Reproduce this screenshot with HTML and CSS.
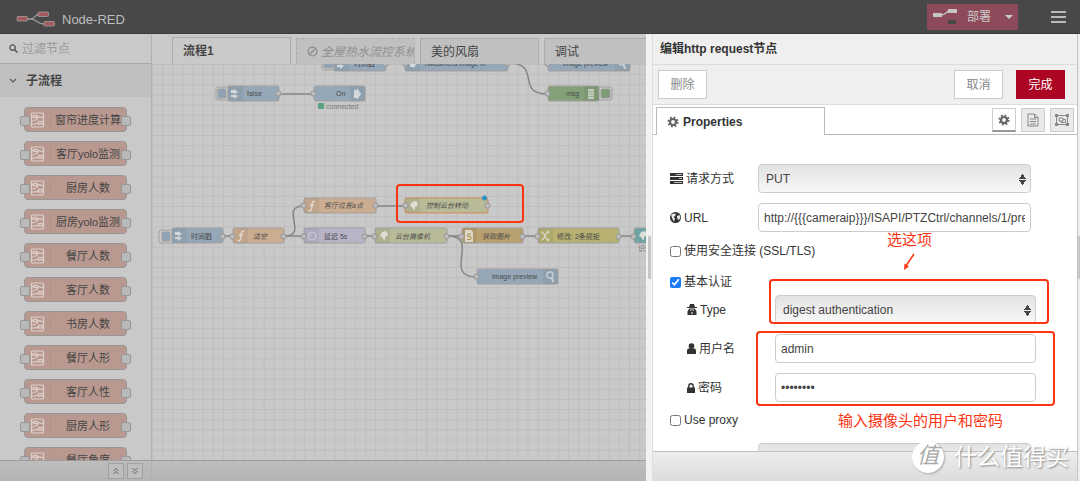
FILE: index.html
```html
<!DOCTYPE html>
<html lang="zh-CN">
<head>
<meta charset="utf-8">
<title>Node-RED</title>
<link rel="stylesheet" href="styles.css">
</head>
<body>
<svg class="defs" aria-hidden="true">
  <symbol id="subflow" viewBox="0 0 14 16"><g fill="none" stroke="#dcd0cc" stroke-width="1.2"><rect x="1" y="1" width="12" height="14" rx="1"/><path d="M1 4.500h2M6.500 4.500C9 4.500 9 5.500 13 5.500M6.500 5C9 6 5 9 1 9M1 12h3c2 0 2-1 4-1M11.500 11H13"/><rect x="3" y="3.500" width="3.500" height="2"/><rect x="8" y="9.500" width="3.500" height="2.500"/></g></symbol>
  <symbol id="arrow-in" viewBox="0 0 8 10"><path d="M0 1h3V0l4 3-4 2V4H0zM0 6h3V5l4 2-4 3V8H0z" fill="#d5d8da"/></symbol>
  <symbol id="arrow-out" viewBox="0 0 8 12"><path d="M1 2h3V0l4 6-4 6v-2H1z" fill="#d5d8da"/></symbol>
  <symbol id="func" viewBox="0 0 8 12"><path d="M7 1.500C5 .5 4.500 2 4.200 4L3.500 9c-.3 2-1.500 2.500-3 1.500M2 5h4" fill="none" stroke="#e0d8d0" stroke-width="1.400"/></symbol>
  <symbol id="planet" viewBox="0 0 10 10"><path d="M3 1l4-1 2 3-1 2-2 1v3L4 8 3 6 1 5z" fill="#deded2"/></symbol>
  <symbol id="mag" viewBox="0 0 10 12"><circle cx="5" cy="4" r="3.200" fill="none" stroke="#d0d5d8" stroke-width="1.200"/><path d="M6.500 7l2 4" stroke="#d0d5d8" stroke-width="1.700"/></symbol>
  <symbol id="gear" viewBox="0 0 14 14"><circle cx="7" cy="7" r="3.500" fill="none" stroke="currentColor" stroke-width="2.600"/><circle cx="7" cy="7" r="5.400" fill="none" stroke="currentColor" stroke-width="2.200" stroke-dasharray="2.120 2.120"/></symbol>
</svg>

<header class="topbar">
  <svg class="brand-mark" width="40" height="17" viewBox="0 0 40 17"><path d="M11 8h3C20 8 18 3.500 23 3.500M14 8c8 0 6 5 14 5" fill="none" stroke="#999" stroke-width="1.300"/><g fill="#a35a5c" stroke="#aaa" stroke-width=".7"><rect x="1" y="5.500" width="10.500" height="4.500" rx="1"/><rect x="22" y="1" width="10.500" height="4.500" rx="1"/><rect x="28" y="10.500" width="10.500" height="4.500" rx="1"/></g></svg>
  <span class="brand">Node-RED</span>
  <button class="deploy"><svg width="24" height="17" viewBox="0 0 24 17"><path d="M8 7c6 0 4-4 9-4" fill="none" stroke="#c4c4c4" stroke-width="1.300"/><path d="M0 5h9v4H0zM15 1h9v4h-9z" fill="#c8c4c4"/><path d="M15 12h8v4h-8z" fill="#484848"/></svg><span>部署</span><i class="caret"></i></button>
  <button class="menu" aria-label="菜单"><i></i><i></i><i></i></button>
</header>

<main class="workspace">
  <div class="editor">
    <aside class="palette">
      <label class="search"><svg width="9" height="9" viewBox="0 0 9 9"><circle cx="3.600" cy="3.600" r="2.700" fill="none" stroke="#555" stroke-width="1.300"/><path d="M5.600 5.600l2.900 2.900" stroke="#555" stroke-width="1.500"/></svg><input type="text" placeholder="过滤节点" aria-label="过滤节点"></label>
      <button class="category"><svg width="8" height="6" viewBox="0 0 8 6"><path d="M1 1l3 3 3-3" fill="none" stroke="#555" stroke-width="1.200"/></svg>子流程</button>
      <div class="nodes">
        <div class="pnode"><svg><use href="#subflow"/></svg><span>窗帘进度计算</span></div>
        <div class="pnode"><svg><use href="#subflow"/></svg><span>客厅yolo监测</span></div>
        <div class="pnode"><svg><use href="#subflow"/></svg><span>厨房人数</span></div>
        <div class="pnode"><svg><use href="#subflow"/></svg><span>厨房yolo监测</span></div>
        <div class="pnode"><svg><use href="#subflow"/></svg><span>餐厅人数</span></div>
        <div class="pnode"><svg><use href="#subflow"/></svg><span>客厅人数</span></div>
        <div class="pnode"><svg><use href="#subflow"/></svg><span>书房人数</span></div>
        <div class="pnode"><svg><use href="#subflow"/></svg><span>餐厅人形</span></div>
        <div class="pnode"><svg><use href="#subflow"/></svg><span>客厅人性</span></div>
        <div class="pnode"><svg><use href="#subflow"/></svg><span>厨房人形</span></div>
        <div class="pnode"><svg><use href="#subflow"/></svg><span>餐厅角度</span></div>
      </div>
      <div class="palette-foot">
        <button aria-label="全部折叠"><svg width="8" height="8" viewBox="0 0 8 8"><path d="M1.500 4L4 1.500 6.500 4M1.500 7L4 4.500 6.500 7" fill="none" stroke="#666"/></svg></button>
        <button aria-label="全部展开"><svg width="8" height="8" viewBox="0 0 8 8"><path d="M1.500 1L4 3.500 6.500 1M1.500 4L4 6.500 6.500 4" fill="none" stroke="#666"/></svg></button>
      </div>
    </aside>
    <section class="flows">
      <nav class="tabs">
        <a href="#" class="tab active">流程1</a>
        <a href="#" class="tab disabled"><svg width="11" height="11" viewBox="0 0 11 11"><circle cx="5.500" cy="5.500" r="4.300" fill="none" stroke="#8c8c8c" stroke-width="1.300"/><path d="M8.500 2.500l-6 6" stroke="#8c8c8c" stroke-width="1.300"/></svg><span>全屋热水流控系统</span></a>
        <a href="#" class="tab">美的风扇</a>
        <a href="#" class="tab last">调试</a>
      </nav>
      <svg class="canvas">
        <defs><pattern id="grid" width="10.150" height="10.150" patternUnits="userSpaceOnUse"><path d="M0 .5H10.150M.5 0V10.150" stroke="#bebebe" stroke-width="1"/></pattern></defs>
        <rect width="100%" height="100%" fill="url(#grid)"/>
        <g transform="translate(-152 -64)">
          <g class="wires">
            <path d="M279 94H314M223 236H233M284 236H304M365 236H375M447 236H462M523 236H538M619 236H634M376 206H405"/>
            <path d="M508 63C543 63 514 94 548 94M284 236C310 236 278 206 304 206M447 236C482 236 441 277 477 277"/>
          </g>
          <g class="box">
            <rect x="216" y="87" width="16" height="13" rx="2" fill="#c9c9c9"/><rect x="218" y="89" width="8" height="9" rx="1" fill="#8fa3b4"/>
            <rect x="322" y="57" width="16" height="13" rx="2" fill="#c9c9c9"/><rect x="324" y="59" width="9" height="9" rx="1" fill="#8fa3b4"/>
            <rect x="159" y="230" width="16" height="13" rx="2" fill="#c9c9c9"/><rect x="162" y="232" width="8" height="9" rx="1" fill="#8fa3b4"/>
            <rect x="596" y="87" width="16" height="13" rx="2" fill="#c9c9c9"/><rect x="601" y="89" width="9" height="9" rx="1" fill="#7a9c72"/>
            <g fill="#96a8b8"><rect x="228" y="86" width="51" height="15" rx="2"/><rect x="314" y="86" width="51" height="15" rx="2"/><rect x="334" y="56" width="52" height="15" rx="2"/><rect x="405" y="56" width="103" height="15" rx="2"/><rect x="548" y="56" width="82" height="15" rx="2"/><rect x="172" y="228" width="51" height="15" rx="2"/><rect x="477" y="269" width="81" height="15" rx="2"/></g>
            <rect x="548" y="86" width="51" height="15" rx="2" fill="#83a079"/>
            <g fill="#ccad92"><rect x="233" y="228" width="51" height="15" rx="2"/><rect x="304" y="198" width="72" height="15" rx="2"/></g>
            <rect x="304" y="228" width="61" height="15" rx="2" fill="#b9b3c8"/>
            <rect x="375" y="228" width="72" height="15" rx="2" fill="#b8ba98"/>
            <rect x="405" y="198" width="83" height="15" rx="2" fill="#b8ba98" class="selected"/>
            <rect x="462" y="228" width="61" height="15" rx="2" fill="#b9a070"/>
            <rect x="538" y="228" width="81" height="15" rx="2" fill="#b7b172"/>
            <rect x="634" y="228" width="60" height="15" rx="2" fill="#6fa3a5"/>
          </g>
          <path class="shade" d="M228 86h15v15h-15zM350 86h15v15h-15zM584 86h15v15h-15zM334 56h15v15h-15zM405 56h15v15h-15zM615 56h15v15h-15zM172 228h15v15h-15zM233 228h15v15h-15zM304 228h15v15h-15zM375 228h15v15h-15zM462 228h15v15h-15zM538 228h15v15h-15zM304 198h15v15h-15zM405 198h15v15h-15zM543 269h15v15h-15z"/>
          <g class="port">
            <rect x="276" y="91" width="5" height="5" rx="2"/><rect x="311" y="91" width="5" height="5" rx="2"/><rect x="545" y="91" width="5" height="5" rx="2"/><rect x="383" y="61" width="5" height="5" rx="2"/><rect x="403" y="61" width="5" height="5" rx="2"/><rect x="505" y="61" width="5" height="5" rx="2"/><rect x="545" y="61" width="5" height="5" rx="2"/>
            <rect x="220" y="234" width="5" height="5" rx="2"/><rect x="230" y="234" width="5" height="5" rx="2"/><rect x="281" y="234" width="5" height="5" rx="2"/><rect x="301" y="234" width="5" height="5" rx="2"/><rect x="362" y="234" width="5" height="5" rx="2"/><rect x="372" y="234" width="5" height="5" rx="2"/><rect x="444" y="234" width="5" height="5" rx="2"/><rect x="459" y="234" width="5" height="5" rx="2"/><rect x="520" y="234" width="5" height="5" rx="2"/><rect x="535" y="234" width="5" height="5" rx="2"/><rect x="616" y="234" width="5" height="5" rx="2"/><rect x="631" y="234" width="5" height="5" rx="2"/>
            <rect x="301" y="203" width="5" height="5" rx="2"/><rect x="373" y="203" width="5" height="5" rx="2"/><rect x="403" y="203" width="5" height="5" rx="2"/><rect x="485" y="203" width="5" height="5" rx="2"/><rect x="474" y="274" width="5" height="5" rx="2"/>
          </g>
          <use href="#arrow-in" x="231" y="89" width="8" height="10"/><use href="#arrow-in" x="337" y="59" width="8" height="10"/><use href="#arrow-in" x="175" y="231" width="8" height="10"/><use href="#arrow-out" x="353" y="88" width="8" height="12"/><use href="#arrow-out" x="409" y="57" width="8" height="12"/>
          <use href="#func" x="237" y="230" width="8" height="12"/><use href="#func" x="308" y="200" width="8" height="12"/>
          <use href="#planet" x="379" y="231" width="10" height="10"/><use href="#planet" x="409" y="201" width="10" height="10"/><use href="#planet" x="638" y="231" width="10" height="10"/>
          <use href="#mag" x="545" y="271" width="10" height="12"/><use href="#mag" x="617" y="58" width="10" height="12"/>
          <g fill="none" stroke="#cfcbd6"><circle cx="312" cy="236" r="4"/><path d="M309 234l3 2"/></g>
          <path d="M465 230h6l2 2v10h-8z" fill="#ddd8cc"/><path d="M471 234h-3v2.500h1.500a1.500 1.500 0 010 3H467" fill="none" stroke="#b09050" stroke-width="1.200"/>
          <path d="M541 232c5 0 3 8 8 8M541 240c5 0 3-8 8-8M547 230.500l2 1.500-2 1.500M547 238.500l2 1.500-2 1.500" fill="none" stroke="#d8d6c2" stroke-width="1.200"/>
          <path d="M588 89h6v10h-6z" fill="#c2ccbe"/><path d="M588 91.500h6M588 94h6M588 96.500h6" stroke="#83a079" stroke-width=".6"/>
          <circle cx="484.500" cy="198" r="2.500" fill="#2f93c2"/>
          <rect x="318" y="103" width="6" height="6" rx="1" fill="#5aa17f"/>
          <g class="names">
            <text x="247" y="96">false</text><text x="336" y="96">On</text><text x="326" y="109" class="dim">connected</text><text x="354" y="66">时间戳</text><text x="425" y="66">hikcamera image in</text><text x="563" y="66">image preview</text><text x="566" y="96">msg</text>
            <text x="191" y="239">时间戳</text><text x="324" y="239">延迟 5s</text><text x="557" y="239">修改: 2条规矩</text><text x="492" y="279">image preview</text><text x="638" y="251" class="dim">识别</text>
            <g class="it"><text x="253" y="239">清空</text><text x="324" y="208">客厅位置a点</text><text x="426" y="208">控制云台转动</text><text x="395" y="239">云台摄像机</text><text x="482" y="239">获取图片</text></g>
          </g>
          <rect x="397" y="185" width="126" height="37" rx="3" fill="none" stroke="#fb3412" stroke-width="2"/>
        </g>
      </svg>
      <div class="flow-foot"></div>
    </section>
  </div>

  <div class="splitter"><i></i></div>
  <section class="tray">
    <h1>编辑http request节点</h1>
    <div class="toolbar"><button>删除</button><span class="fill"></span><button>取消</button><button class="primary">完成</button></div>
    <div class="tray-tabs">
      <a href="#" class="ttab"><svg width="12" height="12"><use href="#gear"/></svg>Properties</a>
      <div class="tools">
        <button class="on" aria-label="属性"><svg width="12" height="12"><use href="#gear"/></svg></button>
        <button aria-label="描述"><svg width="12" height="14" viewBox="0 0 12 14"><path d="M1 1h6.500L11 4.500V13H1zM7.500 1v3.500H11M3 6h6M3 8.500h6M3 11h6" fill="none" stroke="#888"/></svg></button>
        <button aria-label="外观"><svg width="14" height="12" viewBox="0 0 14 12"><g fill="none" stroke="#888"><path d="M1.500 1.500h11v9h-11zM4 4h4v3H4zM8 5.500h2.500v3H6V7"/></g><path d="M0 0h3v3H0zM11 0h3v3h-3zM0 9h3v3H0zM11 9h3v3h-3z" fill="#888"/></svg></button>
      </div>
    </div>
    <form class="form">
      <div class="row"><label for="method"><svg width="13" height="11" viewBox="0 0 13 11"><path d="M0 0h13v3H0zM0 4h13v3H0zM0 8h13v3H0z" fill="#333"/><path d="M6 1.500h6M9 5.500h3M4 9.500h8" stroke="#bbb"/></svg>请求方式</label><select id="method"><option>PUT</option></select></div>
      <div class="row"><label for="url"><svg width="11" height="11" viewBox="0 0 11 11"><circle cx="5.500" cy="5.500" r="5.500" fill="#333"/><path d="M1 3l2.500-1.500L6 2 5 4 3.500 5 5 6.500 4 9.500 2.500 7zM7 4l2.500-1 .8 2.500L9 8 7.500 7z" fill="#eee"/></svg>URL</label><input id="url" type="text" value="http://{{{cameraip}}}/ISAPI/PTZCtrl/channels/1/preset"></div>
      <div class="check ssl"><input type="checkbox" id="ssl"><label for="ssl">使用安全连接 (SSL/TLS)</label></div>
      <div class="check auth"><input type="checkbox" id="auth" checked><label for="auth">基本认证</label></div>
      <div class="row sub type"><label for="type"><svg width="10" height="11" viewBox="0 0 10 11"><path d="M3 0h4l1 3H2zM0 3h10v1H0zM2 4.500h6C8 6 9.500 6 9.500 8v3H.5V8c0-2 1.500-2 1.500-3.500z" fill="#333"/><path d="M3 6h1.500M5.500 6H7M4 9h2" stroke="#fff"/></svg>Type</label><select id="type"><option>digest authentication</option></select></div>
      <div class="row sub"><label for="user"><svg width="9" height="11" viewBox="0 0 9 11"><circle cx="4.500" cy="3" r="2.800" fill="#333"/><path d="M0 11V8c0-2 1-2.700 2.500-2.700h4C8 5.300 9 6 9 8v3z" fill="#333"/></svg>用户名</label><input id="user" type="text" value="admin"></div>
      <div class="row sub"><label for="pw"><svg width="8" height="10" viewBox="0 0 8 10"><path d="M0 4.500h8V10H0z" fill="#333"/><path d="M1.800 5V3a2.200 2.200 0 014.400 0v2" fill="none" stroke="#333" stroke-width="1.400"/></svg>密码</label><input id="pw" type="password" value="password"></div>
      <div class="check proxy"><input type="checkbox" id="proxy"><label for="proxy">Use proxy</label></div>
      <div class="row ret"><label for="ret"><svg width="11" height="11"></svg>返回</label><select id="ret"><option>UTF-8 字符串</option></select></div>
    </form>
    <footer class="tray-foot"></footer>
    <span class="note frame-type"></span>
    <span class="note frame-auth"></span>
    <span class="note text-type">选这项</span>
    <span class="note text-auth">输入摄像头的用户和密码</span>
    <svg class="note pointer" width="12" height="18" viewBox="0 0 12 18"><path d="M11 1L3.500 12" stroke="#fb3412" stroke-width="1.500"/><path d="M1 17l.5-6.500 4.500 3z" fill="#fb3412"/></svg>
    <div class="watermark"><b>值</b><span>什么值得买</span></div>
  </section>
  <div class="edge"><i></i></div>
</main>
</body>
</html>
```

FILE: styles.css
```css
* { box-sizing: border-box; }
body {
  margin: 0;
  height: 100vh;
  display: flex;
  flex-direction: column;
  overflow: hidden;
  background: #c9c9c9;
  color: #444;
  font: 12px/18px "Liberation Sans", "Noto Sans CJK SC", sans-serif;
}
button, input, select { font: inherit; color: inherit; margin: 0; }
button { cursor: pointer; }
a { color: inherit; text-decoration: none; }
svg { flex: none; }
.defs { position: absolute; width: 0; height: 0; }

.topbar {
  flex: none;
  height: 34px;
  display: flex;
  align-items: center;
  padding: 0 14px 0 16px;
  background: #484848;
  border-bottom: 1px solid #3c3c3c;
}
.brand { margin: 6px auto 0 6px; font-size: 13px; color: #bdbdbd; }
.brand-mark { margin-top: 6px; }
.deploy {
  display: flex;
  align-items: center;
  width: 91px;
  height: 26px;
  padding: 0 6px;
  gap: 10px;
  border: 0;
  background: #8d4a5a;
  color: #ccc;
  white-space: nowrap;
}
.caret { margin-left: 4px; border: 4px solid transparent; border-top-color: #ccc; border-bottom: 0; }
.menu { display: grid; gap: 3px; width: 15px; margin-left: 33px; padding: 0; border: 0; background: none; }
.menu i { height: 2px; background: #bbb; }

.workspace { flex: 1; min-height: 0; display: flex; }
.editor { flex: 1; min-width: 0; display: flex; }

.palette { width: 152px; flex: none; display: flex; flex-direction: column; border-right: 1px solid #b0b0b0; }
.search { flex: none; display: flex; align-items: center; gap: 3px; height: 30px; padding-left: 9px; border-bottom: 1px solid #aaa; }
.search input { width: 110px; padding: 0 1px; border: 0; background: none; }
.search input::placeholder { color: #999; opacity: 1; }
.category {
  flex: none;
  display: flex;
  align-items: center;
  gap: 9px;
  height: 33px;
  padding: 0 9px;
  border: 0;
  background: #bfbfbf;
  font-weight: bold;
}
.nodes { flex: 1; min-height: 0; overflow: hidden; display: flex; flex-direction: column; gap: 9px; padding: 10px 24px 0; }
.pnode {
  position: relative;
  flex: none;
  display: flex;
  align-items: center;
  height: 25px;
  border: 1px solid #979797;
  border-radius: 4px;
  background: #b9998f;
  font-size: 11px;
}
.pnode svg { width: 26px; height: 16px; border-right: 1px solid #af9087; }
.pnode span { flex: 1; padding-right: 1px; text-align: center; white-space: nowrap; }
.pnode::before, .pnode::after {
  content: "";
  position: absolute;
  top: 8px;
  width: 8px;
  height: 8px;
  border: 1px solid #979797;
  border-radius: 2px;
  background: #b9b9b9;
}
.pnode::before { left: -5px; }
.pnode::after { right: -5px; }
.palette-foot {
  flex: none;
  display: flex;
  justify-content: flex-end;
  align-items: center;
  gap: 3px;
  height: 21px;
  padding-right: 8px;
  border-top: 1px solid #9d9d9d;
  background: linear-gradient(#bdbdbd, #b4b4b4);
}
.palette-foot button { display: grid; place-items: center; width: 16px; height: 16px; padding: 0; border: 1px solid #a0a0a0; background: #bebebe; }

.flows { flex: 1; min-width: 0; display: flex; flex-direction: column; }
.tabs { flex: none; display: flex; align-items: flex-end; gap: 5px; height: 30px; padding-left: 20px; overflow: hidden; }
.tab {
  display: flex;
  align-items: center;
  gap: 3px;
  flex: 0 0 119px;
  height: 26px;
  padding-left: 10px;
  overflow: hidden;
  white-space: nowrap;
  border: 1px solid #acacac;
  border-bottom: 0;
  background: #c0c0c0;
}
.tab.active { height: 27px; background: #c9c9c9; font-weight: bold; }
.tab.disabled { border-style: dashed; color: #909090; font-style: italic; }
.tab.last { flex: 1 0 103px; }
.canvas { flex: 1; min-height: 0; width: 100%; display: block; overflow: hidden; }
.flow-foot { flex: none; height: 21px; border-top: 1px solid #9d9d9d; background: linear-gradient(#bdbdbd, #b4b4b4); }
.wires { fill: none; stroke: #858585; stroke-width: 1.5px; }
.box rect { stroke: #a0a0a0; stroke-width: 1px; }
.box .selected { stroke: #d08a58; }
.shade { fill: rgba(0, 0, 0, .05); }
.port rect { fill: #bdbdbd; stroke: #969696; stroke-width: 1px; }
.names text { font-size: 7px; fill: #4a4a4a; }
.names .dim { fill: #777; }
.it text { font-style: italic; }

.splitter { flex: none; display: flex; align-items: center; width: 7px; padding-left: 2px; background: #f2f2f2; border-right: 1px solid #ddd; }
.splitter i, .edge i { width: 3px; height: 43px; border-radius: 1px; background: #c6c6c6; }
.edge { flex: none; display: flex; align-items: center; justify-content: flex-end; width: 3px; background: #eee; border-left: 1px solid #c4c4c4; }

.tray { position: relative; flex: 0 0 424px; display: flex; flex-direction: column; background: #fff; }
h1 { flex: none; height: 31px; margin: 0; padding-left: 7px; font-size: 12px; line-height: 30px; color: #333; background: #efefef; border-bottom: 1px solid #dcdcdc; }
.toolbar { flex: none; display: flex; align-items: center; height: 40px; padding: 0 12px 0 5px; background: #efefef; border-bottom: 1px solid #dcdcdc; }
.toolbar button { width: 49px; height: 29px; padding: 0; border: 1px solid #ccc; background: #fff; color: #888; }
.toolbar .primary { margin-left: 13px; border-color: #ad0625; background: #ad0625; color: #fff; }
.fill { flex: 1; }
.tray-tabs { flex: none; display: flex; align-items: flex-end; justify-content: space-between; height: 30px; padding: 0 3px; border-bottom: 1px solid #bbb; }
.ttab { display: flex; align-items: center; gap: 4px; width: 169px; height: 28px; margin-bottom: -1px; padding-left: 10px; border: 1px solid #bbb; border-bottom: 0; background: #fff; font-weight: bold; color: #333; }
.ttab svg, .tools .on { color: #666; }
.tools { display: flex; gap: 5px; padding-bottom: 2px; }
.tools button { display: grid; place-items: center; width: 24px; height: 24px; padding: 0; border: 1px solid #ccc; background: #eaeaea; }
.tools .on { background: #fff; border-bottom: 2px solid #999; }

.form { flex: 1; min-height: 0; overflow: hidden; padding: 29px 0 0 17px; color: #333; }
.row { display: flex; align-items: center; height: 29px; margin-bottom: 10px; padding-right: 46px; }
.row label { display: flex; align-items: center; gap: 3px; width: 88px; flex: none; }
.row input, .row select { flex: 1; min-width: 0; height: 29px; padding: 0 5px; border: 1px solid #ccc; border-radius: 4px; background: #fff; color: #444; }
.row select {
  appearance: none;
  padding: 0 7px;
  background:
    conic-gradient(from 145deg at 50% 0, #444 70deg, transparent 0) right 4px top 9px / 7px 5px no-repeat,
    conic-gradient(from -35deg at 50% 100%, #444 70deg, transparent 0) right 4px top 15px / 7px 5px no-repeat,
    linear-gradient(#e2e2e2, #f8f8f8);
}
.sub { padding: 0 41px 0 17px; }
.check { display: flex; align-items: center; gap: 3px; height: 18px; }
.check input { width: 11px; height: 11px; accent-color: #1a7bf5; }
.check.auth { margin: 13px 0 4px; }
.check.proxy { margin: -1px 0 14px; }
.tray-foot { flex: none; height: 30px; background: linear-gradient(#ededed, #dcdcdc); border-top: 1px solid #c0c0c0; }

.note { position: absolute; color: #fb3412; font-size: 15px; line-height: 20px; white-space: nowrap; pointer-events: none; }
.frame-type, .frame-auth { border: 2px solid #fb3412; border-radius: 4px; }
.frame-type { left: 116px; top: 245px; width: 280px; height: 45px; }
.frame-auth { left: 103px; top: 297px; width: 299px; height: 75px; }
.text-type { left: 234px; top: 196px; }
.text-auth { left: 185px; top: 377px; }
.pointer { left: 250px; top: 219px; }
.watermark { position: absolute; right: 8px; bottom: 8px; display: flex; align-items: center; gap: 10px; color: #fff; font-size: 23px; line-height: 32px; text-shadow: 1px 1px 2px #888; white-space: nowrap; }
.watermark b { width: 32px; height: 32px; border-radius: 50%; background: #fff; color: #aaa; font-size: 22px; line-height: 30px; font-weight: normal; font-style: italic; text-align: center; text-shadow: none; box-shadow: 1px 1px 2px #aaa; }
```
